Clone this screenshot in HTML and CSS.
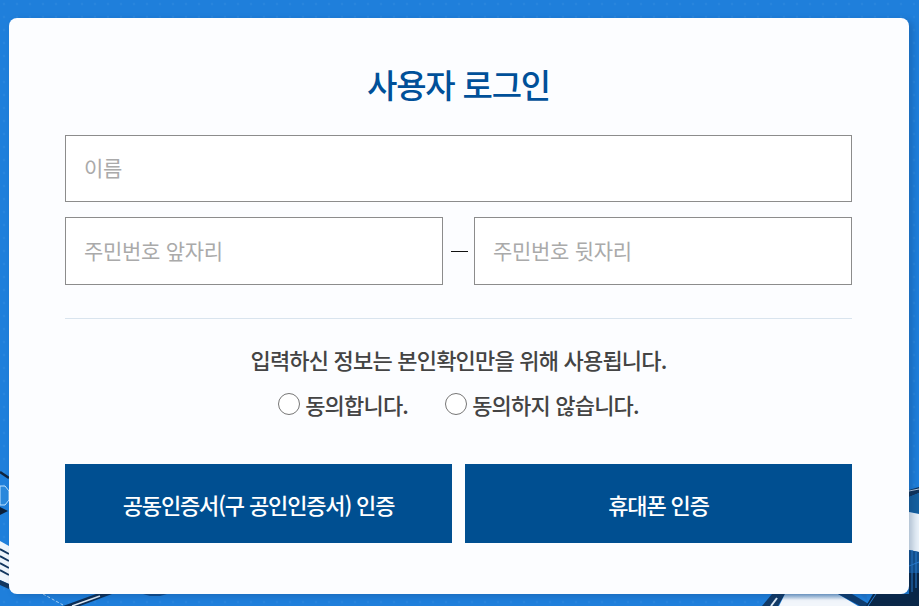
FILE: index.html
```html
<!DOCTYPE html>
<html lang="ko">
<head>
    <meta charset="utf-8">
    <meta name="viewport" content="width=device-width, initial-scale=1.0">
    <title>사용자 로그인</title>
    <link rel="stylesheet" href="styles.css">
</head>
<body>
    <!-- background artwork, only the edges show around the card -->
    <svg class="bg-art" width="919" height="606" viewBox="0 0 919 606">
        <defs>
            <pattern id="dots" width="13" height="13" patternUnits="userSpaceOnUse">
                <circle cx="4" cy="4" r="1.2" fill="#3a8fe2" opacity="0.35"/>
            </pattern>
            <linearGradient id="panel" x1="0" y1="0" x2="0" y2="1">
                <stop offset="0" stop-color="#7fa9d4"/>
                <stop offset="0.5" stop-color="#f2f6fb"/>
            </linearGradient>
        </defs>
        <rect width="919" height="606" fill="url(#dots)"/>
        <!-- left edge -->
        <path d="M0 472L9 478" stroke="#10243f" stroke-width="2.5"/>
        <path d="M0 486H5L9 491V500L5 505H0Z" fill="#2a88dc" stroke="#bfe2ff" stroke-width="1"/>
        <path d="M0 507L8 511L0 515Z" fill="#0b1f3a"/>
        <path d="M0 541L9 546V584L0 580Z" fill="#eef4fb"/>
        <path d="M0 549L9 554M0 556L9 561M0 563L9 568M0 570L9 575" stroke="#12365f" stroke-width="2"/>
        <path d="M0 580L9 584V589L0 585Z" fill="#12365f"/>
        <!-- bottom edge -->
        <path d="M43 594L63 605" stroke="#a9d2f5" stroke-width="1" stroke-dasharray="3 2"/>
        <path d="M63 606L96 594H112L80 606Z" fill="#0d2f57"/>
        <path d="M72 606L100 596" stroke="#dfeaf5" stroke-width="1.5"/>
        <path d="M143 594H167L160 596H150Z" fill="#0f4c8f"/>
        <path d="M762 606L772 594H785L778 606Z" fill="#123a66"/>
        <path d="M771 606L777 598" stroke="#dbe9f6" stroke-width="2"/>
        <path d="M779 606L785 594H838L858 606Z" fill="url(#panel)"/>
        <path d="M838 594L860 606H872L852 594Z" fill="#0f3c6e"/>
        <path d="M860 594L872 606H869L866 594Z" fill="#2278cf"/>
        <path d="M866 606L873 594H909V606Z" fill="#0a2748"/>
        <path d="M868 606L876 594" stroke="#2b80d4" stroke-width="1"/>
        <!-- right edge -->
        <path d="M909 490L919 487V493L909 497Z" fill="#10335a"/>
        <path d="M909 491L919 489" stroke="#b7cbe0" stroke-width="1"/>
        <path d="M909 497L919 493V514L909 512Z" fill="#15609f"/>
        <path d="M909 512L919 514V552L909 550Z" fill="#e9f1f9"/>
        <path d="M909 550L919 552V573H909Z" fill="#14518f"/>
        <path d="M909 573H919V606H909Z" fill="#0a2748"/>
        <path d="M912 550V592M916 552V588M909 566L919 562" stroke="#2b80d4" stroke-width="1"/>
    </svg>

    <div class="login-card">
        <h2 class="login-title">사용자 로그인</h2>

        <input class="login-input name-input" type="text" placeholder="이름">

        <div class="jumin-row">
            <input class="login-input" type="text" placeholder="주민번호 앞자리">
            <span class="jumin-dash"></span>
            <input class="login-input" type="text" placeholder="주민번호 뒷자리">
        </div>

        <div class="divider"></div>

        <p class="agree-text">입력하신 정보는 본인확인만을 위해 사용됩니다.</p>
        <div class="agree-options">
            <label class="agree-option"><input type="radio" name="agree"><span>동의합니다.</span></label>
            <label class="agree-option"><input type="radio" name="agree"><span>동의하지 않습니다.</span></label>
        </div>

        <div class="login-buttons">
            <button class="login-button">공동인증서(구 공인인증서) 인증</button>
            <button class="login-button">휴대폰 인증</button>
        </div>
    </div>
</body>
</html>
```

FILE: styles.css
```css
* {
    box-sizing: border-box;
}

html,
body {
    height: 100%;
}

body {
    margin: 0;
    padding: 18px 10px 12px 9px;
    overflow: hidden;
    background-color: #1f7fdb;
    font-family: "Noto Sans CJK KR", "Noto Sans", sans-serif;
    color: #444444;
}

.bg-art {
    position: absolute;
    left: 0;
    top: 0;
}

.login-card {
    position: relative;
    height: 576px;
    padding: 0 57px 0 56px;
    background-color: #fcfdff;
    border-radius: 8px;
    box-shadow: 4px 2px 6px rgba(10, 50, 100, 0.25);
}

.login-title {
    margin: 0;
    height: 117px;
    padding-top: 43px;
    font-size: 33px;
    line-height: 46px;
    font-weight: 500;
    letter-spacing: -1.2px;
    text-align: center;
    color: #005099;
}

.login-input {
    display: block;
    width: 100%;
    height: 68px;
    padding: 0 0 3px 18px;
    background-color: #ffffff;
    border: 1px solid #8c8c8c;
    border-radius: 0;
    outline: none;
    font-family: inherit;
    font-size: 21px;
    letter-spacing: -0.3px;
    color: #444444;
}

.name-input {
    height: 67px;
}

.login-input::placeholder {
    color: #aaaaaa;
    opacity: 1;
}

.jumin-row {
    display: flex;
    align-items: center;
    margin-top: 15px;
}

.jumin-row .login-input {
    flex: 1;
    min-width: 0;
}

.jumin-dash {
    width: 17px;
    height: 1px;
    margin: 0 6px 0 8px;
    background-color: #111111;
}

.divider {
    height: 1px;
    margin-top: 33px;
    background-color: #d9e4ee;
}

.agree-text {
    margin: 22px 0 0;
    font-size: 22px;
    line-height: 36px;
    font-weight: 500;
    letter-spacing: -0.8px;
    text-align: center;
}

.agree-options {
    display: flex;
    justify-content: center;
    gap: 37px;
    margin-top: 9px;
    height: 36px;
}

.agree-option {
    display: flex;
    align-items: center;
    font-size: 22px;
    font-weight: 500;
    letter-spacing: -0.8px;
}

.agree-option input {
    width: 22px;
    height: 22px;
    margin: 0 5px 0 0;
}

.login-buttons {
    display: flex;
    gap: 13px;
    margin-top: 42px;
}

.login-button {
    flex: 1;
    height: 79px;
    padding: 0;
    background-color: #004f91;
    border: none;
    font-family: inherit;
    font-size: 22px;
    font-weight: 500;
    letter-spacing: -1.15px;
    color: #ffffff;
    cursor: pointer;
}
```
